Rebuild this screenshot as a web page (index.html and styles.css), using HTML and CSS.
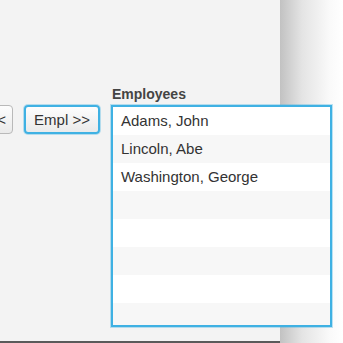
FILE: index.html
```html
<!DOCTYPE html>
<html lang="en">
<head>
    <meta charset="UTF-8">
    <meta name="viewport" content="width=device-width, initial-scale=1.0">
    <title>Employees</title>
    <link rel="stylesheet" href="styles.css">
</head>
<body>
    <div class="screen">
        <div class="window">
            <div class="controls">
                <button class="btn btn-back">&lt;&lt;</button>
                <button class="btn btn-empl focused">Empl &gt;&gt;</button>
                <div class="list-group">
                    <div class="list-label">Employees</div>
                    <div class="list" id="employeeList"></div>
                </div>
            </div>
        </div>
        <div class="shadow"></div>
    </div>

    <script>
        var employees = ["Adams, John", "Lincoln, Abe", "Washington, George"];
        var list = document.getElementById("employeeList");

        for (let i = 0; i < 8; i++) {
            let row = document.createElement("div");
            row.className = "list-row";
            row.innerText = employees[i] || "";
            list.appendChild(row);
        }
    </script>
</body>
</html>
```

FILE: styles.css
```css
body {
    margin: 0;
    background-color: #ffffff;
    font-family: "Liberation Sans", Arial, sans-serif;
    overflow: hidden;
}
.screen {
    display: flex;
    width: 343px;
    height: 343px;
    overflow: hidden;
}
.window {
    position: relative;
    z-index: 1;
    width: 280px;
    height: 343px;
    flex-shrink: 0;
    background-color: #f3f3f3;
    border-bottom: 2px solid #5a5a5a;
    padding-top: 86px;
    box-sizing: border-box;
}
.shadow {
    flex: 1;
    height: 343px;
    background: linear-gradient(to right, #c2c2c2 0%, #e4e4e4 35%, #fafafa 80%, #ffffff 100%);
}
.controls {
    display: flex;
    align-items: flex-start;
    gap: 11px;
    margin-left: -48px;
}
.btn {
    flex-shrink: 0;
    margin-top: 19px;
    height: 29px;
    padding: 0;
    font-family: "Liberation Sans", Arial, sans-serif;
    font-size: 15px;
    color: #333333;
    background: linear-gradient(#fdfdfd, #eaeaea);
    border: 1px solid #b9b9b9;
    border-radius: 4px;
    box-sizing: border-box;
}
.btn-back {
    width: 61px;
    text-align: right;
    padding-right: 6px;
}
.btn-empl {
    width: 76px;
}
.btn.focused {
    border: 2px solid #3fb1e3;
    box-shadow: 0 0 0 1px rgba(63, 177, 227, 0.35);
}
.list-group {
    flex-shrink: 0;
    width: 221px;
}
.list-label {
    font-size: 14px;
    font-weight: bold;
    color: #444444;
    line-height: 17px;
    height: 17px;
    margin-bottom: 2px;
    padding-left: 1px;
}
.list {
    height: 222px;
    box-sizing: border-box;
    border: 2px solid #3fb1e3;
    box-shadow: 0 0 0 1px rgba(63, 177, 227, 0.35);
    background-color: #ffffff;
    overflow: hidden;
}
.list-row {
    height: 28px;
    line-height: 28px;
    padding-left: 8px;
    font-size: 15px;
    color: #333333;
}
.list-row:nth-child(even) {
    background-color: #f7f7f7;
}
```
